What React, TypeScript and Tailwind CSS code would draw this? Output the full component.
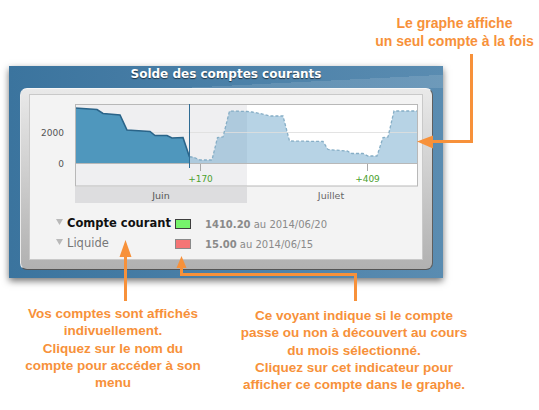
import React from "react";

const dark: number[][] = [
  [75, 108], [97, 109.5], [103, 113.5], [120, 115], [127, 130], [150, 131.5],
  [155, 135.5], [167, 135.5], [172, 138], [183, 137.5], [189.5, 157],
];

const light: number[][] = [
  [189.5, 157], [193, 157], [200, 160], [212, 160], [217.5, 137.5], [223, 137],
  [229.5, 111], [247, 111.5], [252, 112], [260, 113.5], [270, 116], [283, 116],
  [289.5, 141], [323, 141.5], [328, 149.5], [347, 151], [352, 153.5], [363, 153.5],
  [368, 156], [377, 156], [383, 137.5], [388, 137], [394, 111], [417, 111],
];

const line = (pts: number[][]) => "M " + pts.map((p) => p.join(",")).join(" L ");
const area = (pts: number[][]) =>
  line(pts) + ` L ${pts[pts.length - 1][0]},163 L ${pts[0][0]},163 Z`;

function Chart() {
  return (
    <svg width={392} height={111} className="block">
      <g transform="translate(-30,-95)" fontFamily="'DejaVu Sans', sans-serif">
        {/* backgrounds */}
        <rect x={75} y={104} width={172} height={82} fill="#efeff1" />
        <rect x={247} y={104} width={170.5} height={82} fill="#ffffff" />
        <rect x={75} y={187} width={172} height={16} fill="#dddddf" />

        <path d={area(light)} fill="rgba(96,158,198,0.45)" />
        <line x1={75} y1={132.5} x2={417} y2={132.5} stroke="rgba(222,222,222,0.85)" />
        <path d={area(dark)} fill="#4f97bd" />

        <path d={line(light)} fill="none" stroke="#86aec6" strokeWidth={1.3} strokeDasharray="3 2" />
        <path d={line(dark)} fill="none" stroke="#2a6489" strokeWidth={1.6} />

        <line x1={75} y1={163.5} x2={417} y2={163.5} stroke="#b8b8b8" />
        <rect x={75.5} y={104.5} width={342} height={81.5} fill="none" stroke="#b8b8b8" />

        <line x1={189.5} y1={104} x2={189.5} y2={168} stroke="#2f6c94" />
        <line x1={200.5} y1={164} x2={200.5} y2={171} stroke="#a8a8a8" />
        <line x1={367.5} y1={164} x2={367.5} y2={171} stroke="#a8a8a8" />

        <text x={64} y={135.8} fontSize={9} fill="#555" textAnchor="end">2000</text>
        <text x={64} y={166.6} fontSize={9} fill="#555" textAnchor="end">0</text>
        <text x={200.5} y={181.8} fontSize={9} fill="#4c9f2e" textAnchor="middle">+170</text>
        <text x={367.5} y={181.8} fontSize={9} fill="#4c9f2e" textAnchor="middle">+409</text>
        <text x={161} y={199} fontSize={9.5} fill="#555" textAnchor="middle">Juin</text>
        <text x={331} y={199} fontSize={9.5} fill="#666" textAnchor="middle">Juillet</text>
      </g>
    </svg>
  );
}

function Row({
  name,
  bold,
  swatch,
  amount,
  date,
}: {
  name: string;
  bold?: boolean;
  swatch: string;
  amount: string;
  date: string;
}) {
  return (
    <div className="flex h-[20px] items-center pl-[26px] font-['DejaVu_Sans',sans-serif]">
      <svg width={7} height={7} className="mb-[3px] block">
        <polygon points="0,0 7,0 3.5,6" fill="#b9b9b9" />
      </svg>
      <span
        className={
          bold
            ? "ml-[4px] w-[108px] text-[11.5px] font-bold text-[#111]"
            : "ml-[4px] w-[108px] text-[11.5px] text-[#777]"
        }
      >
        {name}
      </span>
      <span className={swatch} />
      <span className="ml-[14px] whitespace-nowrap text-[10px] text-[#8a8a8a]">
        <b>{amount}</b> au {date}
      </span>
    </div>
  );
}

export default function App() {
  return (
    <div className="relative h-[410px] w-[539px] overflow-hidden bg-white">
      <p className="ml-[370px] w-[169px] whitespace-nowrap pt-[15px] text-center font-['Liberation_Sans',Arial,sans-serif] text-[14px] font-bold leading-[17.5px] text-[#f7913a]">
        Le graphe affiche
        <br />
        un seul compte à la fois
      </p>

      <div className="ml-[9px] mt-[16px] h-[212px] w-[434px] bg-linear-to-r from-[#3b749e] to-[#5a8cb1] shadow-[0_3px_7px_rgba(0,0,0,0.55)]">
        <div className="h-[22px] bg-linear-to-br from-transparent from-70% to-[rgba(255,255,255,0.12)] to-70% text-center font-['DejaVu_Sans',sans-serif] text-[12px] font-bold leading-[16px] text-white [text-shadow:0_1px_1px_rgba(0,0,0,0.6)]">
          Solde des comptes courants
        </div>
        <div className="ml-[11px] h-[182px] w-[413px] rounded-[7px] border border-t-[#f6f6f6] border-l-[#ececec] border-r-[#5f5f5f] border-b-[#555] bg-linear-to-b from-[#e9e9e9] to-[#b1b1b1] pl-[8px] pt-[5px]">
          <div className="h-[166px] w-[394px] border border-[#c9c9c9] bg-[#f3f3f3]">
            <Chart />
            <div className="mt-[8px]">
              <Row
                name="Compte courant"
                bold
                swatch="h-[10px] w-[16px] border border-[#3d3d3d] bg-[#76f36c]"
                amount="1410.20"
                date="2014/06/20"
              />
              <Row
                name="Liquide"
                swatch="h-[10px] w-[16px] border border-[#8a8a8a] bg-[#f47575]"
                amount="15.00"
                date="2014/06/15"
              />
            </div>
          </div>
        </div>
      </div>

      <div className="flex font-['Liberation_Sans',Arial,sans-serif] text-[13.5px] font-bold leading-[17.3px] text-[#f7913a]">
        <p className="mt-[27px] w-[226px] whitespace-nowrap text-center">
          Vos comptes sont affichés
          <br />
          indivuellement.
          <br />
          Cliquez sur le nom du
          <br />
          compte pour accéder à son
          <br />
          menu
        </p>
        <p className="ml-[-2px] mt-[29px] w-[260px] whitespace-nowrap text-center">
          Ce voyant indique si le compte
          <br />
          passe ou non à découvert au cours
          <br />
          du mois sélectionné.
          <br />
          Cliquez sur cet indicateur pour
          <br />
          afficher ce compte dans le graphe.
        </p>
      </div>

      {/* callout arrows */}
      <svg className="pointer-events-none absolute inset-0" width={539} height={410}>
        <g stroke="#f7913a" strokeWidth={3} fill="none">
          <path d="M471.5,54 V141.5 H431" />
          <path d="M125.5,255 V301" />
          <path d="M181.5,266 V274.5 H355.5 V301" />
        </g>
        <g fill="#f7913a">
          <polygon points="417,141.5 433,135.5 433,148.5" />
          <polygon points="125.5,240 119.5,257 131.5,257" />
          <polygon points="181.5,256 176.5,268 186.5,268" />
        </g>
      </svg>
    </div>
  );
}
